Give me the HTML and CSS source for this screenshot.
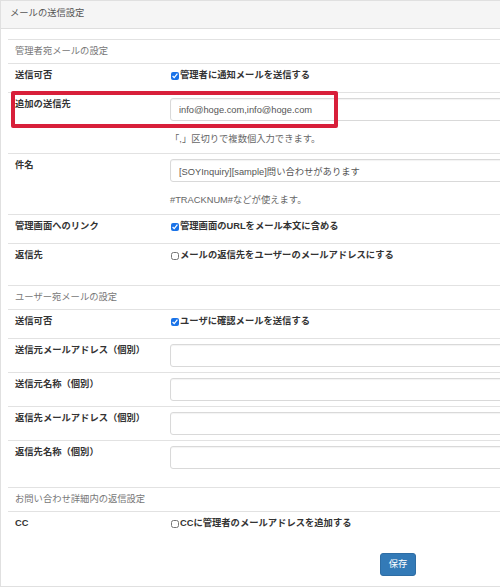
FILE: index.html
```html
<!DOCTYPE html>
<html lang="ja">
<head>
<meta charset="utf-8">
<title>メールの送信設定</title>
<link rel="stylesheet" href="styles.css">
</head>
<body>
<div class="panel">
  <div class="panel-heading">メールの送信設定</div>
  <div class="panel-body">
    <div class="settings">
      <div class="section">管理者宛メールの設定</div>
      <div class="row">
        <div class="label">送信可否</div>
        <div class="value"><label class="check"><input type="checkbox" checked>管理者に通知メールを送信する</label></div>
      </div>
      <div class="row">
        <div class="label">追加の送信先</div>
        <div class="value">
          <input class="text" type="text" value="info@hoge.com,info@hoge.com">
          <p class="help">「,」区切りで複数個入力できます。</p>
        </div>
        <span class="annotation"></span>
      </div>
      <div class="row">
        <div class="label">件名</div>
        <div class="value">
          <input class="text" type="text" value="[SOYInquiry][sample]問い合わせがあります">
          <p class="help">#TRACKNUM#などが使えます。</p>
        </div>
      </div>
      <div class="row">
        <div class="label">管理画面へのリンク</div>
        <div class="value"><label class="check"><input type="checkbox" checked>管理画面のURLをメール本文に含める</label></div>
      </div>
      <div class="row row-tall">
        <div class="label">返信先</div>
        <div class="value"><label class="check"><input type="checkbox">メールの返信先をユーザーのメールアドレスにする</label></div>
      </div>

      <div class="section">ユーザー宛メールの設定</div>
      <div class="row">
        <div class="label">送信可否</div>
        <div class="value"><label class="check"><input type="checkbox" checked>ユーザに確認メールを送信する</label></div>
      </div>
      <div class="row">
        <div class="label">送信元メールアドレス（個別）</div>
        <div class="value"><input class="text" type="text"></div>
      </div>
      <div class="row">
        <div class="label">送信元名称（個別）</div>
        <div class="value"><input class="text" type="text"></div>
      </div>
      <div class="row">
        <div class="label">返信先メールアドレス（個別）</div>
        <div class="value"><input class="text" type="text"></div>
      </div>
      <div class="row row-tall-input">
        <div class="label">返信先名称（個別）</div>
        <div class="value"><input class="text" type="text"></div>
      </div>

      <div class="section">お問い合わせ詳細内の返信設定</div>
      <div class="row">
        <div class="label">CC</div>
        <div class="value"><label class="check"><input type="checkbox">CCに管理者のメールアドレスを追加する</label></div>
      </div>
    </div>
    <div class="actions"><button class="btn" type="button">保存</button></div>
  </div>
</div>
</body>
</html>
```

FILE: styles.css
```css
* {
  box-sizing: border-box;
}

html {
  overflow: hidden;
}

body {
  margin: 0;
  font-family: "Liberation Sans", "Noto Sans CJK JP", sans-serif;
  font-size: 9.3px;
  line-height: 13px;
  color: #333;
  background: #fff;
}

.panel {
  width: 796px;
  border: 1px solid #e0e0e0;
}

.panel-heading {
  background: #f5f5f5;
  border-bottom: 1px solid #dedede;
  padding: 6px 9px 8px;
  color: #555;
}

.panel-body {
  padding: 10px 7px 10px;
}

.section {
  border-top: 1px solid #e2e2e2;
  padding: 5px 7px;
  color: #777;
}

.row {
  position: relative;
  display: flex;
  min-height: 29px;
  border-top: 1px solid #e2e2e2;
}

.row-tall {
  min-height: 42px;
}

.row-tall-input .value {
  padding-bottom: 18px;
}

.label {
  flex: none;
  width: 155px;
  padding: 5px 7px;
  font-weight: bold;
  color: #333;
}

.value {
  flex: 1;
  padding: 5px 7px;
}

.check {
  display: inline-flex;
  align-items: center;
  font-weight: bold;
  color: #333;
}

.check input {
  width: 8px;
  height: 8px;
  margin: 0 1px 0 1px;
  accent-color: #1a73e8;
}

.text {
  display: block;
  width: 100%;
  height: 23px;
  margin: 0;
  padding: 0 8px;
  border: 1px solid #d9d9d9;
  border-radius: 3px;
  box-shadow: inset 0 1px 1px rgba(0, 0, 0, 0.05);
  font: inherit;
  color: #555;
  background: #fff;
}

.help {
  margin: 12px 0 2px;
  color: #666;
}

.annotation {
  position: absolute;
  top: -2px;
  left: 3px;
  width: 327px;
  height: 37px;
  border: 4px solid #d81f3a;
  border-radius: 2px;
}

.actions {
  display: flex;
  justify-content: center;
  padding-top: 13px;
}

.btn {
  width: 36px;
  height: 23px;
  padding: 0;
  background: #337ab7;
  border: 1px solid #2e6da4;
  border-radius: 3px;
  color: #fff;
  font: inherit;
}
```
